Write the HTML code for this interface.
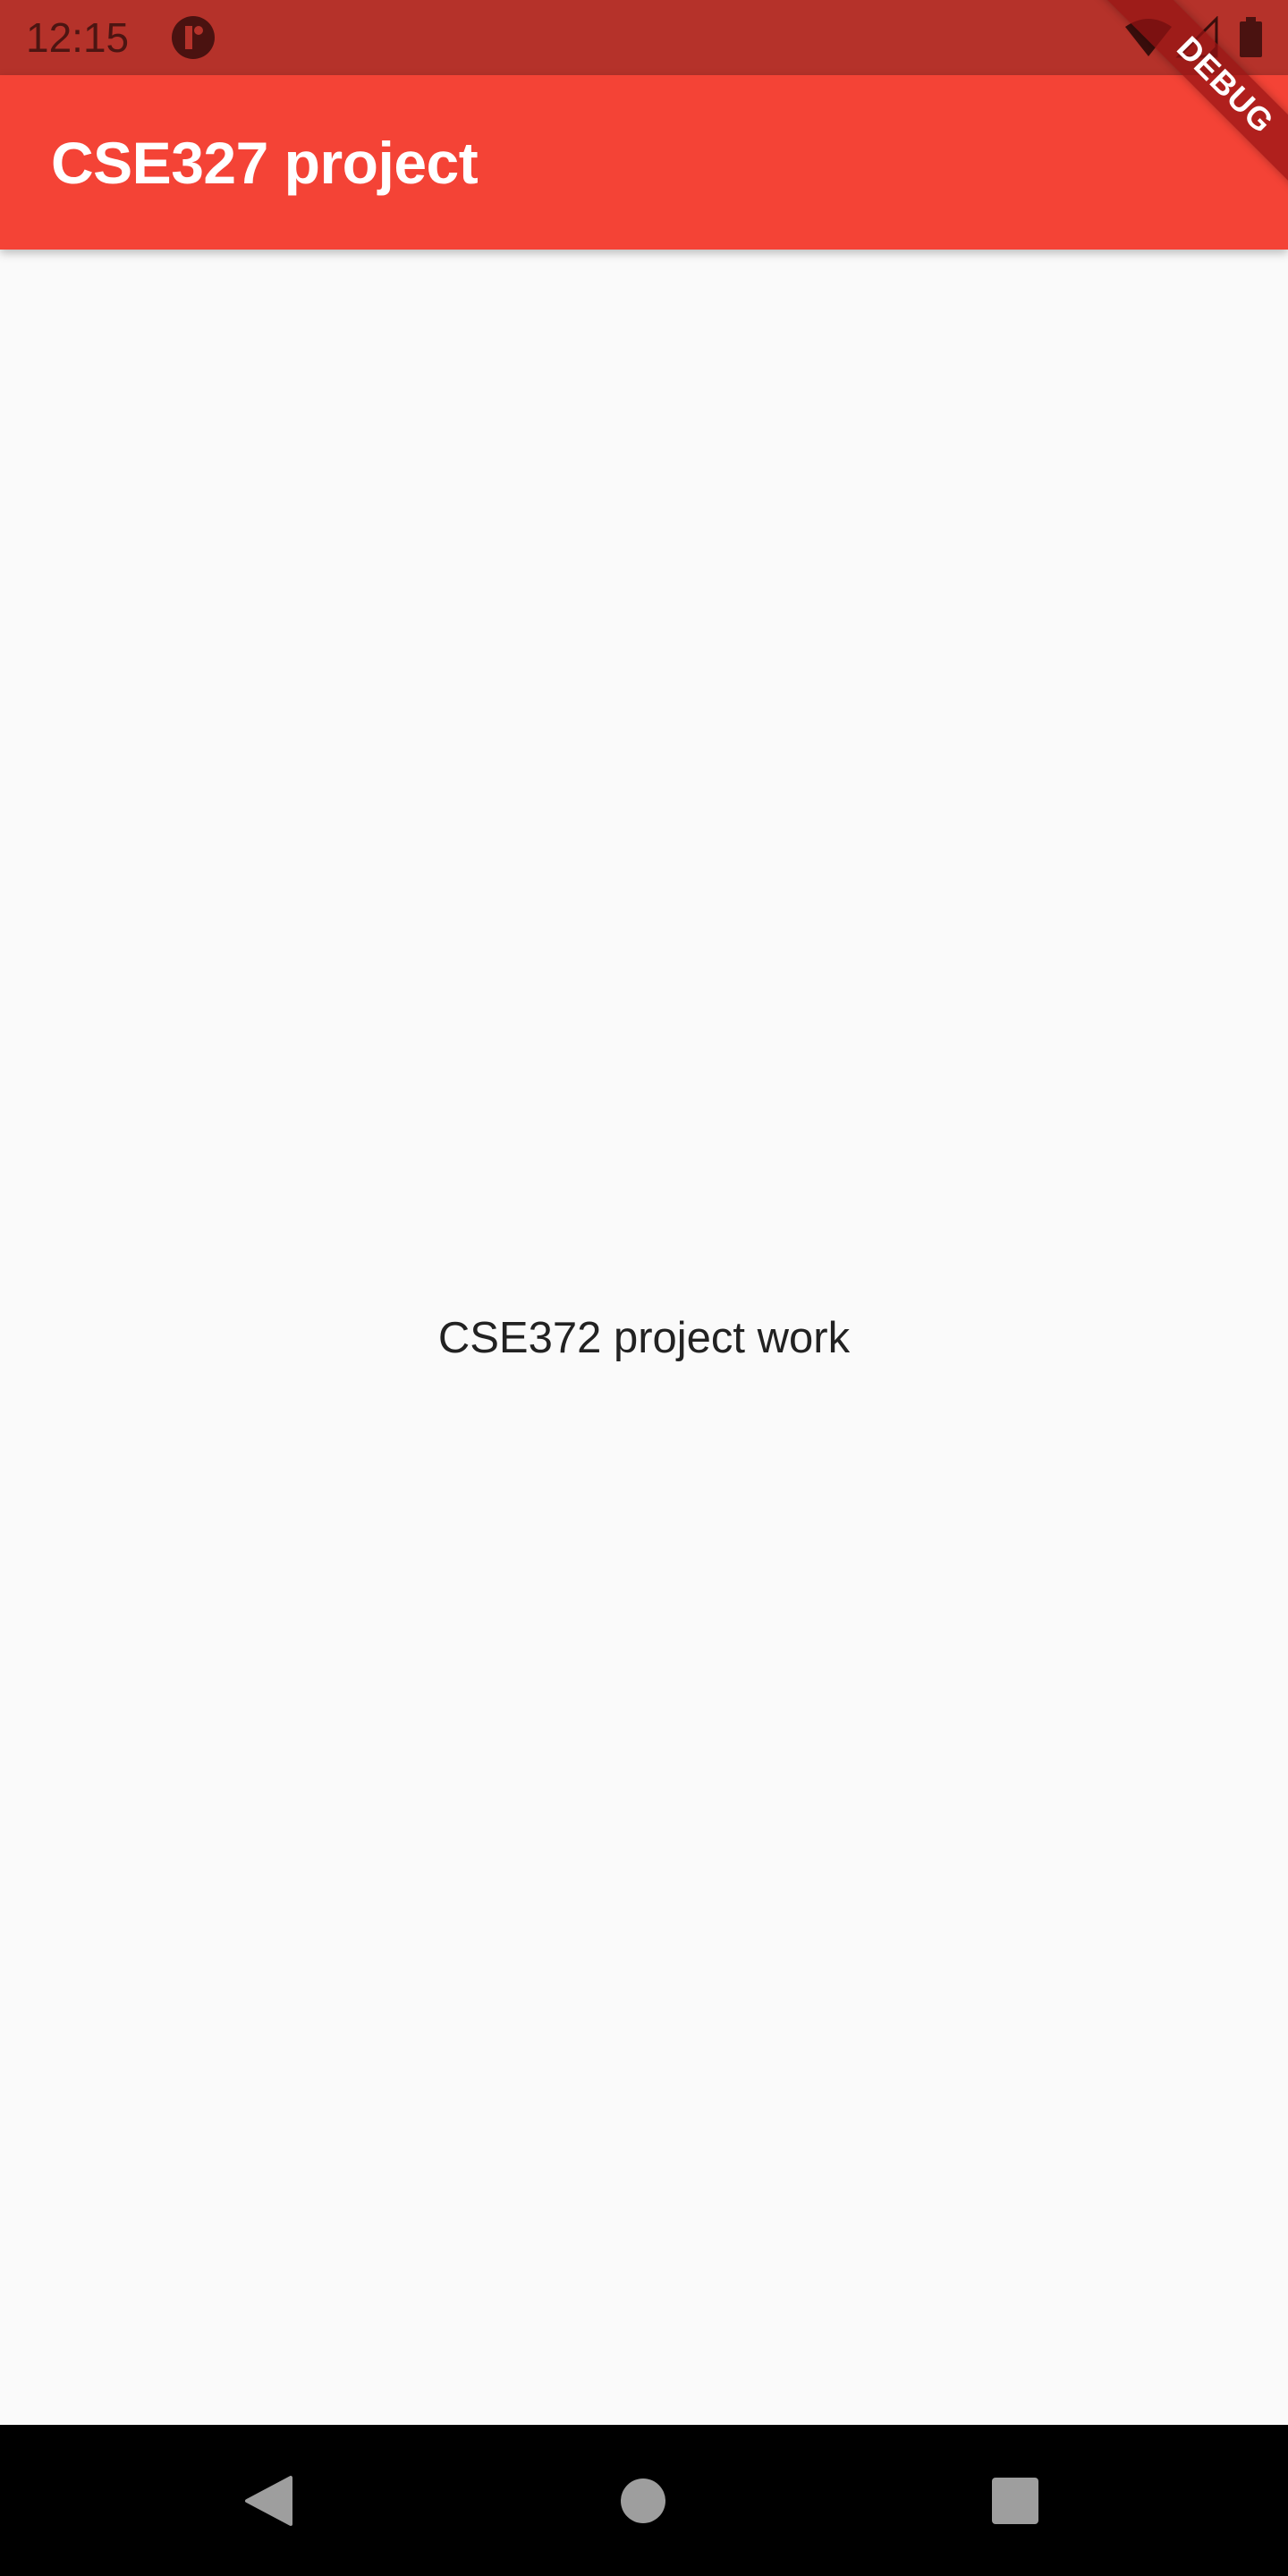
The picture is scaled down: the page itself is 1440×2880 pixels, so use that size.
<!DOCTYPE html>
<html><head><meta charset="utf-8"><style>
html,body{margin:0;padding:0;}
body{width:1440px;height:2880px;position:relative;background:#fafafa;overflow:hidden;font-family:"Liberation Sans",sans-serif;}
.status{position:absolute;left:0;top:0;width:1440px;height:84px;background:#b5322a;}
.time{position:absolute;left:29px;top:14px;font-size:46px;color:#4c1512;line-height:56px;}
.appbar{position:absolute;left:0;top:84px;width:1440px;height:195px;background:#f44336;box-shadow:0 4px 10px rgba(0,0,0,.25);}
.title{position:absolute;left:57px;top:58px;font-size:66px;color:#fff;line-height:80px;font-weight:bold;letter-spacing:-0.5px;}
.body{position:absolute;left:0;width:1440px;top:1466px;text-align:center;font-size:49px;color:#222;line-height:60px;}
.nav{position:absolute;left:0;top:2711px;width:1440px;height:169px;background:#000;}
.banner{position:absolute;left:1170px;top:69px;width:400px;height:52px;background:rgba(150,20,20,.72);transform:rotate(45deg);transform-origin:center;color:#fff;font-weight:bold;font-size:36px;line-height:52px;text-align:center;letter-spacing:1px;box-shadow:0 0 10px rgba(0,0,0,.3);}
</style></head><body>
<div class="status">
<div class="time">12:15</div>
<svg style="position:absolute;left:191px;top:17px" width="50" height="50" viewBox="0 0 50 50"><circle cx="25" cy="25" r="24" fill="#4a1210"/><rect x="16" y="12" width="8" height="26" fill="#b5322a"/><circle cx="31" cy="17" r="5" fill="#b5322a"/></svg>
<svg style="position:absolute;left:1256px;top:18px" width="160" height="50" viewBox="0 0 160 50">
<path d="M2 12 Q28 -6 54 12 L28 45 Z" fill="#3a0e0c"/>
<path d="M104 3 L104 45 L62 45 Z" fill="none" stroke="#3a0e0c" stroke-width="3"/>
<path d="M92 45 L104 33 L104 45Z" fill="#3a0e0c"/>
<rect x="130" y="6" width="25" height="40" rx="2" fill="#4a1210"/><rect x="137" y="1" width="11" height="6" fill="#4a1210"/>
</svg>
</div>
<div class="appbar"><div class="title">CSE327 project</div></div>
<div class="body">CSE372 project work</div>
<div class="nav">
<svg style="position:absolute;left:0;top:0" width="1440" height="169" viewBox="0 0 1440 169">
<path d="M325 59 L325 111 L276 85 Z" fill="#9e9e9e" stroke="#9e9e9e" stroke-width="4" stroke-linejoin="round"/>
<circle cx="719" cy="85" r="25" fill="#9e9e9e"/>
<rect x="1109" y="59" width="52" height="52" rx="4" fill="#9e9e9e"/>
</svg>
</div>
<div class="banner">DEBUG</div>
</body></html>
